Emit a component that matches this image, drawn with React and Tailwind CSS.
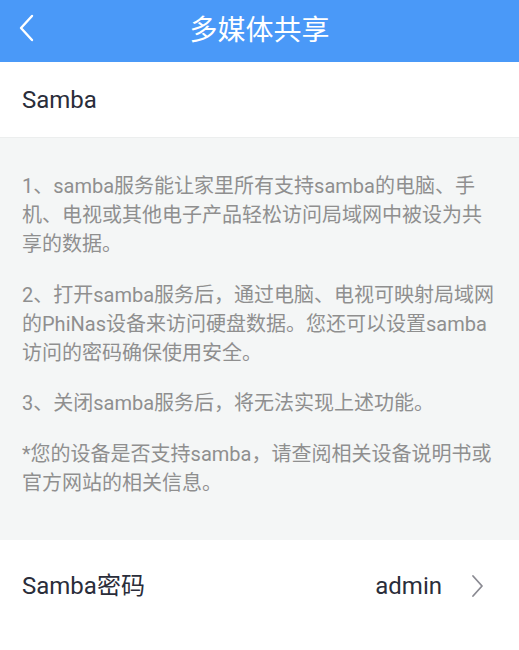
export default function App() {
  const font = { fontFamily: 'Roboto, "Noto Sans CJK SC", sans-serif' };
  return (
    <div className="w-[519px] h-[650px] bg-white flex flex-col" style={font}>
      <div className="h-[62px] bg-[#4a99f8] flex items-center relative shrink-0">
        <svg className="absolute left-[18px] top-[14px]" width="17" height="28" viewBox="0 0 17 28" fill="none">
          <path d="M14 2 L3 14 L14 26" stroke="white" strokeWidth="2.4" strokeLinecap="round" strokeLinejoin="round" />
        </svg>
        <div className="flex-1 text-center text-white text-[28px] leading-none">多媒体共享</div>
      </div>
      <div className="h-[75px] flex items-center px-[22px] text-[24px] text-[#2a2d3a] shrink-0">Samba</div>
      <div className="bg-[#f4f6f6] border-t border-[#eceeee] pt-[34px] pb-[42px] px-[22px] text-[20px] leading-[29px] text-[#8f8f8f] flex flex-col gap-[21.5px] shrink-0">
        <p>1、samba服务能让家里所有支持samba的电脑、手机、电视或其他电子产品轻松访问局域网中被设为共享的数据。</p>
        <p>2、打开samba服务后，通过电脑、电视可映射局域网的PhiNas设备来访问硬盘数据。您还可以设置samba访问的密码确保使用安全。</p>
        <p>3、关闭samba服务后，将无法实现上述功能。</p>
        <p>*您的设备是否支持samba，请查阅相关设备说明书或官方网站的相关信息。</p>
      </div>
      <div className="h-[92px] flex items-center px-[22px] text-[24px] text-[#2a2d3a] shrink-0">
        <span className="flex-1">Samba密码</span>
        <span>admin</span>
        <svg className="ml-[29px] mr-[13px]" width="13" height="24" viewBox="0 0 13 24" fill="none">
          <path d="M2 2 L11 12 L2 22" stroke="#8a8a92" strokeWidth="1.8" strokeLinecap="round" strokeLinejoin="round" />
        </svg>
      </div>
    </div>
  );
}
